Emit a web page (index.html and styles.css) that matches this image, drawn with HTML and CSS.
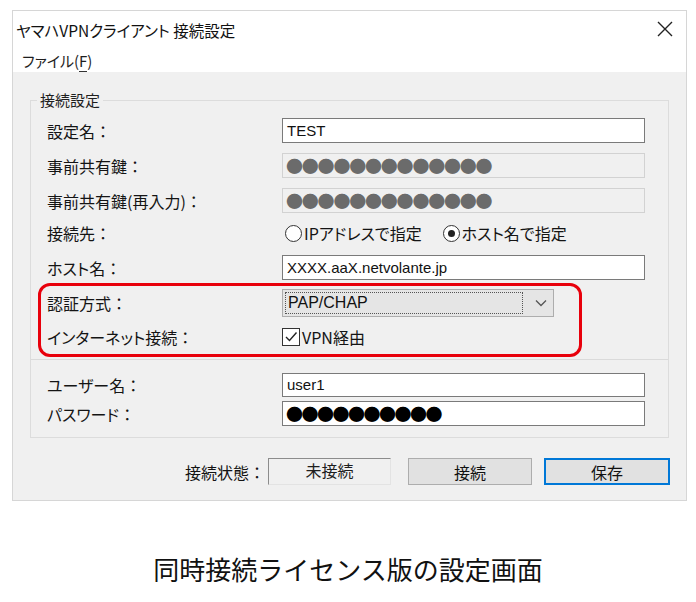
FILE: index.html
```html
<!DOCTYPE html>
<html lang="ja">

<head>
    <meta charset="UTF-8">
    <meta name="viewport" content="width=device-width, initial-scale=1.0">
    <title>接続設定</title>
    <link rel="stylesheet" href="styles.css">
</head>

<body>
    <div class="window">
        <div class="titlebar">
            <span class="title">ヤマハVPNクライアント 接続設定</span>
            <svg class="close" width="16" height="16" viewBox="0 0 16 16">
                <path d="M1 1 L15 15 M15 1 L1 15" stroke="#222" stroke-width="1.4" fill="none" />
            </svg>
        </div>
        <div class="menubar"><span>ファイル(<u>F</u>)</span></div>

        <div class="client">
            <fieldset class="group">
                <legend>接続設定</legend>

                <div class="row r1">
                    <span class="lbl">設定名<span class="colon">：</span></span>
                    <div class="field">TEST</div>
                </div>
                <div class="row r2">
                    <span class="lbl">事前共有鍵<span class="colon">：</span></span>
                    <div class="field disabled dots">●●●●●●●●●●●●●</div>
                </div>
                <div class="row r3">
                    <span class="lbl">事前共有鍵(再入力)<span class="colon">：</span></span>
                    <div class="field disabled dots">●●●●●●●●●●●●●</div>
                </div>
                <div class="row radios">
                    <span class="lbl">接続先<span class="colon">：</span></span>
                    <div class="opts">
                        <span class="opt"><span class="radio"></span>IPアドレスで指定</span>
                        <span class="opt"><span class="radio on"></span>ホスト名で指定</span>
                    </div>
                </div>
                <div class="row r5">
                    <span class="lbl">ホスト名<span class="colon">：</span></span>
                    <div class="field">XXXX.aaX.netvolante.jp</div>
                </div>

                <div class="mark">
                    <div class="row sel-row">
                        <span class="lbl">認証方式<span class="colon">：</span></span>
                        <div class="select">
                            <span class="focus">PAP/CHAP</span>
                            <svg width="12" height="8" viewBox="0 0 12 8">
                                <path d="M1 1.5 L6 6.5 L11 1.5" stroke="#555" stroke-width="1.3" fill="none" />
                            </svg>
                        </div>
                    </div>
                    <div class="row chk-row">
                        <span class="lbl">インターネット接続<span class="colon">：</span></span>
                        <span class="opt">
                            <span class="check">
                                <svg width="16" height="16" viewBox="0 0 16 16">
                                    <path d="M3 8 L6.5 11.5 L13.5 3.5" stroke="#222" stroke-width="1.4" fill="none" />
                                </svg>
                            </span>VPN経由
                        </span>
                    </div>
                </div>

                <div class="sep"></div>

                <div class="row r7">
                    <span class="lbl">ユーザー名<span class="colon">：</span></span>
                    <div class="field">user1</div>
                </div>
                <div class="row r8">
                    <span class="lbl">パスワード<span class="colon">：</span></span>
                    <div class="field dots black">●●●●●●●●●●</div>
                </div>
            </fieldset>

            <div class="statusbar">
                <span class="lbl">接続状態<span class="colon">：</span></span>
                <div class="status">未接続</div>
                <button class="btn">接続</button>
                <button class="btn primary">保存</button>
            </div>
        </div>
    </div>

    <p class="caption">同時接続ライセンス版の設定画面</p>
</body>

</html>
```

FILE: styles.css
```css
body {
    margin: 0;
    background: #fff;
    font-family: "Noto Sans CJK JP", "Noto Sans", sans-serif;
    color: #1e1e1e;
}

.window {
    margin: 10px 0 0 12px;
    width: 675px;
    border: 1px solid #d6d6d6;
    box-sizing: border-box;
}

.titlebar {
    height: 37px;
    display: flex;
    align-items: center;
    justify-content: space-between;
    padding: 0 13px 0 3px;
    background: #fff;
}

.title {
    font-size: 15.5px;
    font-feature-settings: "palt";
    color: #111;
}

.close {
    margin-top: -1px;
}

.menubar {
    height: 24px;
    display: flex;
    align-items: center;
    padding-left: 9px;
    background: #fff;
    font-size: 15px;
    font-feature-settings: "palt";
}

.menubar u {
    text-decoration: none;
    border-bottom: 1px solid #333;
    line-height: 13px;
}

.client {
    background: #f0f0f0;
    padding: 18px 0 15px;
}

.group {
    margin: 0 0 0 17px;
    width: 639px;
    min-width: 0;
    box-sizing: border-box;
    border: 1px solid #dcdcdc;
    padding: 8px 22px 11px 16px;
}

.group legend {
    font-size: 15px;
    line-height: 20px;
    padding: 0 3px;
    margin-left: -10px;
    font-feature-settings: "palt";
}

.row {
    display: flex;
    align-items: center;
    height: 25px;
}

.lbl {
    width: 235px;
    flex: none;
    font-size: 16px;
    font-feature-settings: "palt";
    color: #141414;
}

.colon {
    font-feature-settings: normal;
}

.field {
    width: 363px;
    height: 25px;
    box-sizing: border-box;
    border: 1px solid #7a7a7a;
    background: #fff;
    padding-left: 4px;
    font-family: "Liberation Sans", "Noto Sans CJK JP", sans-serif;
    font-size: 15px;
    line-height: 23px;
    color: #111;
    white-space: nowrap;
    overflow: hidden;
}

.field.disabled {
    background: #f0f0f0;
    border-color: #d2d2d2;
}

.dots {
    font-family: "Noto Sans CJK JP", sans-serif;
    font-size: 17px;
    letter-spacing: -1.2px;
    color: #6b6b6b;
    padding-left: 3px;
}

.dots.black {
    color: #000;
    font-size: 17px;
    letter-spacing: -1.5px;
}

.r1,
.r2 {
    margin-bottom: 10px;
}

.r3 {
    margin-bottom: 8px;
}

.radios {
    height: 24px;
    margin-bottom: 10px;
}

.r5 {
    margin-bottom: 3px;
}

.opts {
    display: flex;
    gap: 21px;
    padding-left: 3px;
}

.opt {
    display: flex;
    align-items: center;
    font-size: 16px;
    font-feature-settings: "palt";
    color: #141414;
}

.radio {
    width: 15px;
    height: 15px;
    border: 1px solid #333;
    border-radius: 50%;
    background: #fff;
    margin-right: 2px;
    display: flex;
    align-items: center;
    justify-content: center;
}

.radio.on::after {
    content: "";
    width: 7px;
    height: 7px;
    border-radius: 50%;
    background: #222;
}

.mark {
    margin-left: -9px;
    width: 544px;
    box-sizing: border-box;
    border: 3px solid #e8000b;
    border-radius: 12px;
    padding: 3px 0 5px 6px;
}

.sel-row {
    height: 28px;
}

.select {
    width: 272px;
    height: 28px;
    box-sizing: border-box;
    border: 1px solid #adadad;
    background: #e5e5e5;
    display: flex;
    align-items: center;
    padding: 0 6px 0 2px;
    gap: 12px;
}

.focus {
    flex: 1;
    height: 22px;
    border: 1px dotted #555;
    box-sizing: border-box;
    font-family: "Liberation Sans", sans-serif;
    font-size: 16px;
    line-height: 20px;
    padding-left: 2px;
    color: #111;
}

.chk-row {
    height: 24px;
    margin-top: 8px;
}

.check {
    width: 18px;
    height: 18px;
    box-sizing: border-box;
    border: 1px solid #333;
    background: #fff;
    display: flex;
    align-items: center;
    justify-content: center;
    margin-right: 2px;
}

.sep {
    height: 1px;
    background: #dadada;
    margin: 2px -22px 0 -16px;
}

.r7 {
    height: 24px;
    margin-top: 13px;
    margin-bottom: 4px;
}

.r7 .field {
    height: 24px;
    line-height: 22px;
}

.statusbar {
    display: flex;
    align-items: center;
    justify-content: flex-end;
    margin-top: 20px;
    padding-right: 16px;
}

.statusbar .lbl {
    width: auto;
    margin-right: 3px;
    font-size: 16px;
}

.status {
    width: 123px;
    height: 27px;
    box-sizing: border-box;
    border: 1px solid #e3e3e3;
    border-top-color: #8c8c8c;
    border-left-color: #8c8c8c;
    text-align: center;
    font-size: 16px;
    line-height: 22px;
    margin-right: 17px;
}

.btn {
    width: 124px;
    height: 27px;
    box-sizing: border-box;
    border: 1px solid #adadad;
    background: #e1e1e1;
    font-family: "Noto Sans CJK JP", sans-serif;
    font-size: 16px;
    color: #111;
    padding: 0;
}

.btn.primary {
    width: 126px;
    margin-left: 12px;
    border: 2px solid #0078d7;
}

.caption {
    margin: 50px 0 0;
    text-align: center;
    font-size: 26px;
    line-height: 36px;
    color: #111;
}
```
